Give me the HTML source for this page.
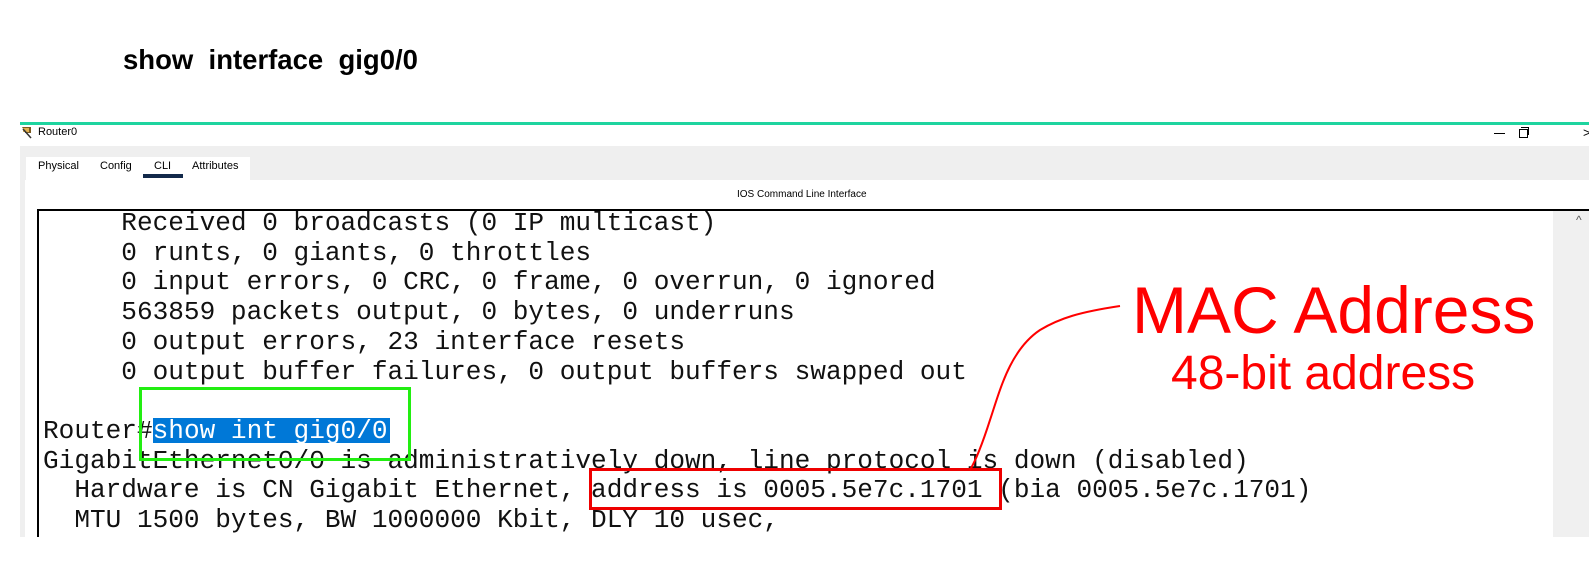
<!DOCTYPE html>
<html><head><meta charset="utf-8"><style>
body{margin:0;width:1589px;height:581px;background:#fff;position:relative;overflow:hidden;font-family:"Liberation Sans",sans-serif}
.a{position:absolute}
.mono{font-family:"Liberation Mono",monospace;font-size:26.1px;white-space:pre;color:#111;line-height:29.7px}
</style></head><body>
<div class="a" style="left:123px;top:44px;font-size:27.5px;font-weight:bold;color:#000">show&nbsp; interface&nbsp; gig0/0</div>
<div class="a" style="left:20px;top:122px;width:1569px;height:3px;background:#1ed49f"></div>
<div class="a" style="left:20px;top:125px;width:1569px;height:412px;background:#fff"></div>
<svg class="a" style="left:21px;top:126px" width="12" height="13"><path d="M1 1h9v6h-6v-1z" fill="#7a5a20"/><rect x="2" y="2" width="6" height="4" fill="#e0b050"/><path d="M2 3l8 9" stroke="#333" stroke-width="1.5"/></svg>
<div class="a" style="left:38px;top:126px;font-size:11px">Router0</div>
<div class="a" style="left:1494px;top:133px;width:11px;height:1px;background:#000"></div>
<div class="a" style="left:1519px;top:129px;width:7px;height:7px;border:1px solid #000;background:#fff"></div>
<div class="a" style="left:1521px;top:127px;width:7px;height:7px;border-top:1px solid #000;border-right:1px solid #000"></div>
<div class="a" style="left:1583px;top:125px;font-size:13px;color:#000">&gt;</div>
<div class="a" style="left:20px;top:146px;width:1569px;height:34px;background:#efefef"></div>
<div class="a" style="left:20px;top:146px;width:5px;height:391px;background:#efefef"></div>
<div class="a" style="left:26px;top:157px;width:224px;height:23px;background:#fff"></div>
<div class="a" style="left:38px;top:160px;font-size:11px">Physical</div>
<div class="a" style="left:100px;top:160px;font-size:11px">Config</div>
<div class="a" style="left:154px;top:160px;font-size:11px">CLI</div>
<div class="a" style="left:143px;top:174px;width:40px;height:4px;background:#12294a"></div>
<div class="a" style="left:192px;top:160px;font-size:11px">Attributes</div>
<div class="a" style="left:737px;top:189px;font-size:10px">IOS Command Line Interface</div>
<div class="a" style="left:37px;top:209px;width:1552px;height:2px;background:#000"></div>
<div class="a" style="left:37px;top:209px;width:2px;height:328px;background:#000"></div>
<div class="a" style="left:1553px;top:211px;width:36px;height:326px;background:#f0f0f0"></div>
<div class="a" style="left:1576px;top:213px;font-size:12px;color:#555">^</div>
<div class="a" style="left:153px;top:418px;width:237px;height:25px;background:#0078d7"></div>
<div class="a mono" style="left:43px;top:209px">     Received 0 broadcasts (0 IP multicast)
     0 runts, 0 giants, 0 throttles
     0 input errors, 0 CRC, 0 frame, 0 overrun, 0 ignored
     563859 packets output, 0 bytes, 0 underruns
     0 output errors, 23 interface resets
     0 output buffer failures, 0 output buffers swapped out

Router#<span style="color:#fff">show int gig0/0</span>
GigabitEthernet0/0 is administratively down, line protocol is down (disabled)
  Hardware is CN Gigabit Ethernet, address is 0005.5e7c.1701 (bia 0005.5e7c.1701)
  MTU 1500 bytes, BW 1000000 Kbit, DLY 10 usec,</div>
<div class="a" style="left:0;top:537px;width:1589px;height:44px;background:#fff"></div>
<div class="a" style="left:139px;top:387px;width:266px;height:68px;border:3px solid #22ee11"></div>
<div class="a" style="left:589px;top:468px;width:407px;height:36px;border:3px solid #ee0000"></div>
<svg class="a" style="left:0;top:0" width="1589" height="581"><path d="M1120 306 C1080 312 1060 318 1040 330 C1010 350 1000 390 990 420 C982 445 976 460 970 470" stroke="#ff0000" stroke-width="2" fill="none"/></svg>
<div class="a" style="left:1132px;top:273px;font-size:66px;color:#ff0000;line-height:74px">MAC Address</div>
<div class="a" style="left:1171px;top:349px;font-size:48px;color:#ff0000;line-height:50px">48-bit address</div>
</body></html>
